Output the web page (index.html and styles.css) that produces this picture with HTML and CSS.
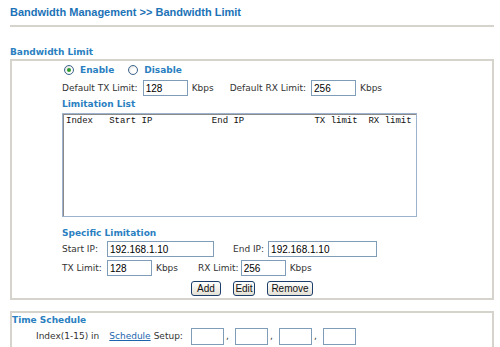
FILE: index.html
```html
<!DOCTYPE html>
<html lang="en">
<head>
    <meta charset="UTF-8">
    <title>Bandwidth Limit</title>
    <link rel="stylesheet" href="styles.css">
</head>
<body>
<div class="page">
    <div class="title">Bandwidth Management &gt;&gt; Bandwidth Limit</div>

    <div class="sec-head">Bandwidth Limit</div>
    <div class="box">
        <div class="in radios">
            <label class="radio"><span class="dot checked"></span>Enable</label>
            <label class="radio"><span class="dot"></span>Disable</label>
        </div>

        <div class="in row row-default">
            <span class="lbl">Default TX Limit:</span>
            <input class="txt short" type="text" value="128">
            <span class="unit">Kbps</span>
            <span class="lbl gap-rx">Default RX Limit:</span>
            <input class="txt short" type="text" value="256">
            <span class="unit">Kbps</span>
        </div>

        <div class="in sub-head">Limitation List</div>
        <div class="in">
            <div class="list"><pre>Index   Start IP           End IP             TX limit  RX limit</pre></div>
        </div>

        <div class="in sub-head spec">Specific Limitation</div>
        <div class="in row row-ip">
            <span class="lbl first">Start IP:</span>
            <input class="txt long" type="text" value="192.168.1.10">
            <span class="lbl gap-end">End IP:</span>
            <input class="txt long end" type="text" value="192.168.1.10">
        </div>
        <div class="in row row-tx">
            <span class="lbl first">TX Limit:</span>
            <input class="txt short col" type="text" value="128">
            <span class="unit">Kbps</span>
            <span class="lbl gap-rxl">RX Limit:</span>
            <input class="txt short tight" type="text" value="256">
            <span class="unit">Kbps</span>
        </div>

        <div class="buttons">
            <button class="btn btn-add">Add</button>
            <button class="btn btn-edit">Edit</button>
            <button class="btn btn-remove">Remove</button>
        </div>
    </div>

    <div class="box sched">
        <div class="sched-head">Time Schedule</div>
        <div class="sched-row">
            <span>Index(1-15) in</span>
            <a href="#" class="link">Schedule</a>
            <span>Setup:</span>
            <input class="txt idx first-idx" type="text">
            <span class="comma">,</span>
            <input class="txt idx" type="text">
            <span class="comma">,</span>
            <input class="txt idx" type="text">
            <span class="comma">,</span>
            <input class="txt idx" type="text">
        </div>
    </div>
</div>
</body>
</html>
```

FILE: styles.css
```css
body {
    margin: 0;
    background: #fff;
    color: #333;
    font-family: "DejaVu Sans", Verdana, sans-serif;
    font-size: 9px;
}

.page {
    width: 484px;
    padding-left: 10px;
}

/* page title */
.title {
    font-family: "Liberation Sans", Arial, sans-serif;
    font-size: 11px;
    font-weight: bold;
    line-height: 14px;
    color: #1b72b7;
    padding: 5px 0 6px;
    border-bottom: 2px solid #d6d3cc;
}

.sec-head {
    margin-top: 19px;
    padding-bottom: 1px;
    line-height: 12px;
    font-weight: bold;
    color: #2a7fc1;
}

.box {
    border: 2px solid #d6d3cc;
    padding-bottom: 2px;
}

.in {
    padding-left: 50px;
}

/* radio buttons */
.radios {
    display: flex;
    align-items: center;
    height: 14px;
    margin-top: 2px;
    padding-left: 52px;
}

.radio {
    display: flex;
    align-items: center;
    font-weight: bold;
    color: #2a7fc1;
    margin-right: 14px;
}

.dot {
    width: 8px;
    height: 8px;
    border: 1px solid #3d6690;
    border-radius: 50%;
    background: radial-gradient(circle at 60% 60%, #fff 30%, #d6d6d2 100%);
    margin-right: 6px;
    position: relative;
}

.dot.checked::after {
    content: "";
    position: absolute;
    left: 2px;
    top: 2px;
    width: 4px;
    height: 4px;
    border-radius: 50%;
    background: #2c9a2c;
}

/* form rows */
.row {
    display: flex;
    align-items: center;
    height: 16px;
}

.row-default {
    margin-top: 3px;
}

.row-ip {
    margin-top: 2px;
}

.row-tx {
    margin-top: 3px;
}

.lbl.first {
    width: 45px;
}

.txt {
    box-sizing: border-box;
    height: 16px;
    margin: 0;
    padding: 0 2px;
    border: 1px solid #7f9db9;
    background: #fff;
    font-family: "Liberation Sans", Arial, sans-serif;
    font-size: 10px;
    color: #000;
    outline: none;
}

.txt.short {
    width: 45px;
    margin-left: 5px;
}

.txt.short.col {
    margin-left: 0;
}

.txt.short.tight {
    margin-left: 2px;
}

.txt.long {
    width: 107px;
    margin-left: 0;
}

.txt.long.end {
    margin-left: 4px;
    width: 109px;
}

.unit {
    margin-left: 4px;
}

.gap-rx {
    margin-left: 16px;
}

.gap-end {
    margin-left: 19px;
}

.gap-rxl {
    margin-left: 20px;
}

.sub-head {
    margin-top: 2px;
    line-height: 12px;
    font-weight: bold;
    color: #2a7fc1;
}

.sub-head.spec {
    margin-top: 10px;
}

.list {
    box-sizing: border-box;
    width: 355px;
    height: 104px;
    margin-top: 3px;
    border: 1px solid #9db2cc;
    box-shadow: inset 1px 1px 0 #8a8a8a;
    background: #fff;
}

.list pre {
    margin: 0;
    padding: 2px 3px;
    font-family: "Liberation Mono", "Courier New", monospace;
    font-size: 9px;
    line-height: 11px;
    color: #111;
}

/* buttons */
.buttons {
    display: flex;
    justify-content: center;
    gap: 12px;
    margin-top: 5px;
}

.btn {
    box-sizing: border-box;
    height: 15px;
    padding: 0;
    border: 1px solid #1d3e6b;
    border-radius: 3px;
    background: linear-gradient(to bottom, #ffffff, #e4e1d5);
    font-family: "Liberation Sans", Arial, sans-serif;
    font-size: 10px;
    line-height: 13px;
    color: #111;
}

.btn-add { width: 30px; }
.btn-edit { width: 22px; }
.btn-remove { width: 46px; }

/* time schedule */
.sched {
    margin-top: 11px;
    padding-bottom: 4px;
}

.sched-head {
    padding-top: 1px;
    line-height: 12px;
    font-weight: bold;
    color: #2a7fc1;
}

.sched-row {
    display: flex;
    align-items: center;
    height: 16px;
    margin-top: 2px;
    padding-left: 24px;
}

.link {
    color: #1d66ad;
    margin-left: 10px;
    margin-right: 3px;
}

.txt.idx {
    width: 33px;
    height: 17px;
    margin-left: 0;
}

.txt.idx.first-idx {
    margin-left: 8px;
}

.comma {
    width: 11px;
    padding-left: 2px;
    box-sizing: border-box;
}
```
